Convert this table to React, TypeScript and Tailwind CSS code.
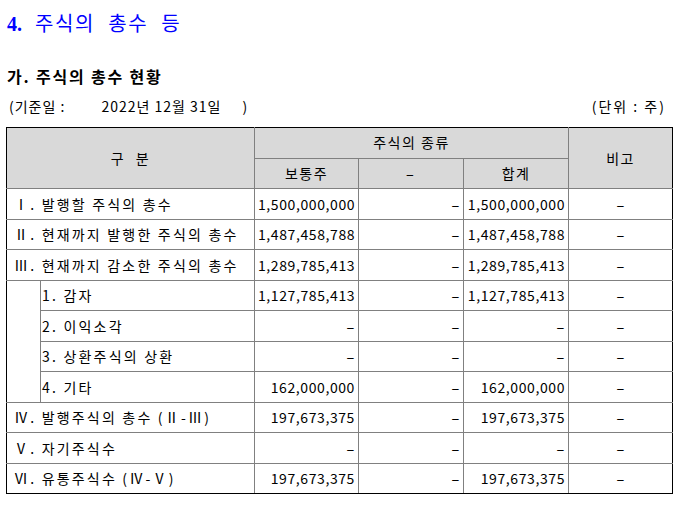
const rows: { label: string; sub?: boolean; a: string; b: string; c: string; d: string }[] = [
  { label: "Ⅰ. 발행할 주식의 총수", a: "1,500,000,000", b: "-", c: "1,500,000,000", d: "-" },
  { label: "Ⅱ. 현재까지 발행한 주식의 총수", a: "1,487,458,788", b: "-", c: "1,487,458,788", d: "-" },
  { label: "Ⅲ. 현재까지 감소한 주식의 총수", a: "1,289,785,413", b: "-", c: "1,289,785,413", d: "-" },
  { label: "1. 감자", sub: true, a: "1,127,785,413", b: "-", c: "1,127,785,413", d: "-" },
  { label: "2. 이익소각", sub: true, a: "-", b: "-", c: "-", d: "-" },
  { label: "3. 상환주식의 상환", sub: true, a: "-", b: "-", c: "-", d: "-" },
  { label: "4. 기타", sub: true, a: "162,000,000", b: "-", c: "162,000,000", d: "-" },
  { label: "Ⅳ. 발행주식의 총수 (Ⅱ-Ⅲ)", a: "197,673,375", b: "-", c: "197,673,375", d: "-" },
  { label: "Ⅴ. 자기주식수", a: "-", b: "-", c: "-", d: "-" },
  { label: "Ⅵ. 유통주식수 (Ⅳ-Ⅴ)", a: "197,673,375", b: "-", c: "197,673,375", d: "-" },
];

const font = { fontFamily: '"Noto Sans CJK KR", sans-serif' };

function Val({ v }: { v: string }) {
  if (v === "-") return <span className="inline-block scale-x-[1.8] px-[2px]">-</span>;
  return <span className="tracking-[0.6px]">{v}</span>;
}

export default function App() {
  const cell = "border border-[#808080] px-[3px] h-[30.5px] text-[14px] leading-none";
  const head = "border border-[#808080] bg-[#d9d9d9] h-[30.5px] text-[14px] font-normal text-center tracking-[1.5px]";

  return (
    <div className="w-[692px] h-[505px] bg-white text-black" style={font}>
      <div className="pl-[7px] pt-[11px] text-[20px] leading-[24px] text-[#0000ff] tracking-[1.6px] [word-spacing:7px]">
        <span className="font-['Liberation_Serif'] font-bold tracking-[0px] [word-spacing:0px]">4.</span> 주식의 총수 등
      </div>
      <div className="pl-[7px] pt-[30px] text-[16px] leading-[20px] font-bold tracking-[1.8px]">가. 주식의 총수 현황</div>
      <div className="flex justify-between pl-[9px] pr-[26px] pt-[10px] text-[14px] leading-[20px] tracking-[1px]">
        <span>
          (기준일 :<span className="inline-block w-[36px]" />2022년 12월 31일<span className="inline-block w-[21px]" />)
        </span>
        <span className="tracking-[2px]">(단위 : 주)</span>
      </div>
      <table className="ml-[6px] mt-[11px] w-[666px] border-collapse border border-black table-fixed">
        <colgroup>
          <col className="w-[34px]" />
          <col className="w-[214px]" />
          <col className="w-[104px]" />
          <col className="w-[105px]" />
          <col className="w-[105px]" />
          <col className="w-[104px]" />
        </colgroup>
        <thead>
          <tr>
            <th colSpan={2} rowSpan={2} className={head + " border-l-black border-t-black [word-spacing:6px]"}>
              구 분
            </th>
            <th colSpan={3} className={head + " border-t-black"}>
              주식의 종류
            </th>
            <th rowSpan={2} className={head + " border-r-black border-t-black"}>
              비고
            </th>
          </tr>
          <tr>
            <th className={head}>보통주</th>
            <th className={head}>
              <Val v="-" />
            </th>
            <th className={head}>합계</th>
          </tr>
        </thead>
        <tbody>
          {rows.map((r, i) => {
            const last = i === rows.length - 1 ? " border-b-black" : "";
            return (
              <tr key={i}>
                {r.label === "1. 감자" && <td rowSpan={4} className="border border-[#808080] border-l-black" />}
                <td
                  colSpan={r.sub ? 1 : 2}
                  className={cell + " tracking-[2.2px]" + (r.sub ? " pl-[1px]" : " pl-[7px] border-l-black") + last}
                >
                  {r.label}
                </td>
                <td className={cell + " text-right" + last}>
                  <Val v={r.a} />
                </td>
                <td className={cell + " text-right" + last}>
                  <Val v={r.b} />
                </td>
                <td className={cell + " text-right" + last}>
                  <Val v={r.c} />
                </td>
                <td className={cell + " text-center border-r-black" + last}>
                  <Val v={r.d} />
                </td>
              </tr>
            );
          })}
        </tbody>
      </table>
    </div>
  );
}
